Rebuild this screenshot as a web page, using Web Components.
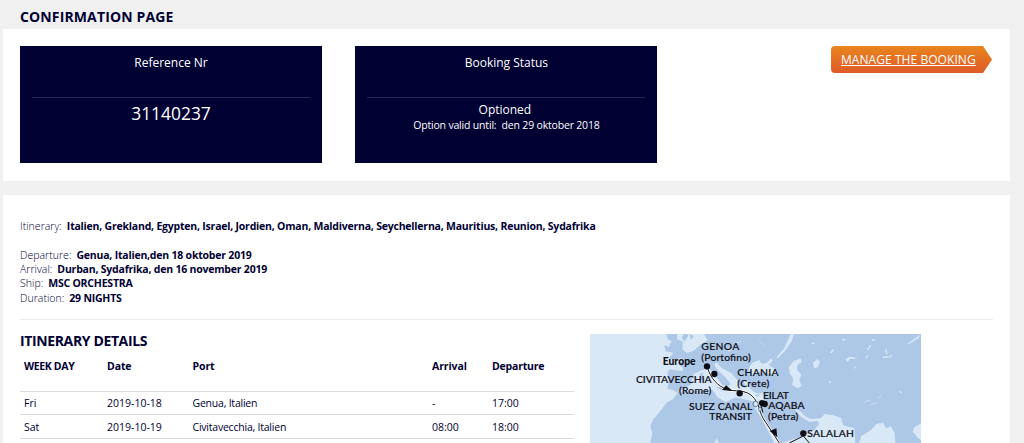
<!DOCTYPE html>
<html lang="en">
<head>
<meta charset="utf-8">
<title>Confirmation page</title>
<style>
	body {
		margin: 0;
		height: 443px;
		overflow: hidden;
		background: #f0f0f0;
		color: #000033;
		font: 11px/14px "Open Sans", sans-serif;
	}

	.page-title {
		--title-spacing: 0.13px;
	}
</style>
</head>
<body>
<booking-page>
	<section-title slot="title" class="page-title">CONFIRMATION PAGE</section-title>
	<page-panel class="summary">
		<status-card label="Reference Nr"><span slot="large">31140237</span></status-card>
		<status-card label="Booking Status">
			<span slot="value">Optioned</span>
			<span slot="note">Option valid until:&nbsp; den 29 oktober 2018</span>
		</status-card>
		<arrow-button href="#">MANAGE THE BOOKING</arrow-button>
	</page-panel>
	<page-panel class="details">
		<cruise-facts>
			<cruise-fact label="Itinerary:" class="spaced">Italien, Grekland, Egypten, Israel, Jordien, Oman, Maldiverna, Seychellerna, Mauritius, Reunion, Sydafrika</cruise-fact>
			<cruise-fact label="Departure:">Genua, Italien,den 18 oktober 2019</cruise-fact>
			<cruise-fact label="Arrival:">Durban, Sydafrika, den 16 november 2019</cruise-fact>
			<cruise-fact label="Ship:">MSC ORCHESTRA</cruise-fact>
			<cruise-fact label="Duration:">29 NIGHTS</cruise-fact>
		</cruise-facts>
		<itinerary-layout>
			<section-title>ITINERARY DETAILS</section-title>
			<itinerary-table></itinerary-table>
			<route-map slot="map"></route-map>
		</itinerary-layout>
	</page-panel>
</booking-page>

<script>
/** Attaches an open shadow root holding the given markup. */
function attach(element, html) {
	element.attachShadow({ mode: "open" }).innerHTML = html;
}

/**
 * Page frame.
 *
 * @slot title - The page heading.
 * @slot - The panels.
 */
class BookingPage extends HTMLElement {
	connectedCallback() {
		attach(this, `
			<style>
				:host { display: block; padding: 0 14px 0 3px; }
				header { box-sizing: border-box; height: 29px; padding: 7px 0 0 17px; }
				main { display: flex; flex-direction: column; gap: 14px; }
				::slotted(.summary) {
					display: flex;
					box-sizing: border-box;
					height: 152px;
					padding: 17px 18px 0 17px;
					align-items: flex-start;
					gap: 33.4px;
				}
				::slotted(.details) {
					box-sizing: border-box;
					height: 248px;
					padding: 24px 17px 0;
				}
			</style>
			<header><slot name="title"></slot></header>
			<main><slot></slot></main>
		`);
	}
}

class SectionTitle extends HTMLElement {
	connectedCallback() {
		attach(this, `
			<style>
				:host { display: block; font-size: 14px; line-height: 19px; }
				h2 { margin: 0; font: inherit; font-weight: 700; letter-spacing: var(--title-spacing, -0.37px); }
			</style>
			<h2><slot></slot></h2>
		`);
	}
}

class PagePanel extends HTMLElement {
	connectedCallback() {
		attach(this, `
			<style>:host { display: block; background: #fff; }</style>
			<slot></slot>
		`);
	}
}

/**
 * Dark card with a label above a rule and a value below it.
 *
 * @attribute {string} label - The label.
 * @slot large - A value in large type.
 * @slot value - A value in regular type.
 * @slot note - Small print below the value.
 */
class StatusCard extends HTMLElement {
	connectedCallback() {
		attach(this, `
			<style>
				:host {
					display: block;
					box-sizing: border-box;
					width: 302px;
					height: 117.4px;
					padding: 6px 12px 0;
					background: #000033;
					color: #fff;
					text-align: center;
				}
				.label {
					height: 44px;
					border-bottom: 1px solid #25254f;
					padding-top: 1px;
					font-size: 12px;
					line-height: 20px;
				}
				.value { padding-top: 2px; }
				slot { display: block; }
				slot[name="large"] { font-size: 17.4px; line-height: 27px; }
				slot[name="value"] { font-size: 12px; line-height: 19px; padding-right: 3px; }
				slot[name="note"] { font-size: 10.5px; line-height: 13px; letter-spacing: -0.18px; }
			</style>
			<div class="label">${this.getAttribute("label")}</div>
			<div class="value">
				<slot name="large"></slot>
				<slot name="value"></slot>
				<slot name="note"></slot>
			</div>
		`);
	}
}

class ArrowButton extends HTMLElement {
	connectedCallback() {
		attach(this, `
			<style>
				:host { display: block; margin-left: auto; }
				a {
					display: block;
					box-sizing: border-box;
					width: 161px;
					height: 27px;
					padding-left: 10px;
					border-radius: 4px 0 0 4px;
					background: linear-gradient(#e8851d, #df5a29);
					clip-path: polygon(0 0, 152px 0, 100% 50%, 152px 100%, 0 100%);
					color: #fff;
					font-size: 12px;
					line-height: 27px;
					letter-spacing: 0.06px;
					white-space: nowrap;
				}
			</style>
			<a href="${this.getAttribute("href")}"><slot></slot></a>
		`);
	}
}

class CruiseFacts extends HTMLElement {
	connectedCallback() {
		attach(this, `
			<style>
				:host {
					display: block;
					box-sizing: border-box;
					height: 101px;
					border-bottom: 1px solid #ebebeb;
				}
				::slotted(.spaced) { margin-bottom: 14.5px; }
			</style>
			<slot></slot>
		`);
	}
}

/**
 * @attribute {string} label - The name of the fact.
 * @slot - Its value.
 */
class CruiseFact extends HTMLElement {
	connectedCallback() {
		attach(this, `
			<style>
				:host { display: flex; gap: 5px; line-height: 14.25px; white-space: nowrap; font-size: 10.5px; }
				span { font-weight: 300; letter-spacing: 0.03px; }
				b { letter-spacing: -0.21px; }
			</style>
			<span>${this.getAttribute("label")}</span><b><slot></slot></b>
		`);
	}
}

/**
 * Two columns: the table and the map.
 *
 * @slot - The left column.
 * @slot map - The right column.
 */
class ItineraryLayout extends HTMLElement {
	connectedCallback() {
		attach(this, `
			<style>
				:host { display: grid; grid-template-columns: 554px 331px; column-gap: 16px; padding-top: 14px; }
				.list { margin-top: -3px; height: 112px; }
			</style>
			<div class="list"><slot></slot></div>
			<slot name="map"></slot>
		`);
	}
}

class ItineraryTable extends HTMLElement {
	stops = [
		["Fri", "2019-10-18", "Genua, Italien", "-", "17:00"],
		["Sat", "2019-10-19", "Civitavecchia, Italien", "08:00", "18:00"],
	];

	connectedCallback() {
		const rows = this.stops.map(
			(stop) => `<tr>${stop.map((cell) => `<td>${cell}</td>`).join("")}</tr>`
		).join("");

		attach(this, `
			<style>
				:host { display: block; font-size: 10.5px; }
				table { width: 554px; table-layout: fixed; border-collapse: collapse; }
				th, td { padding: 0 4px; text-align: left; border-bottom: 1px solid #dcdcdc; }
				th { height: 41px; padding-top: 9px; box-sizing: border-box; vertical-align: top; letter-spacing: -0.1px; }
				th:first-child { letter-spacing: -0.35px; }
				th:last-child { letter-spacing: -0.2px; }
				td { height: 22.6px; line-height: 22px; }
				td:nth-child(3) { letter-spacing: -0.22px; }
				tr:last-child td { padding-top: 1px; height: 21.6px; }
			</style>
			<table>
				<colgroup>
					<col style="width: 83px"><col style="width: 85.5px"><col style="width: 239.5px">
					<col style="width: 60px"><col>
				</colgroup>
				<tr><th>WEEK DAY</th><th>Date</th><th>Port</th><th>Arrival</th><th>Departure</th></tr>
				${rows}
			</table>
		`);
	}
}

/** Map of the route. Drawn at three units to the pixel. */
class RouteMap extends HTMLElement {
	connectedCallback() {
		attach(this, `
			<style>
				:host { display: block; }
				svg { display: block; }
				.land { fill: #adc7e7; }
				.sea { fill: #d8e8f7; }
				.route { fill: none; stroke: #fff; stroke-width: 7; }
				.route.line { stroke: #111; stroke-width: 3; }
				text { font: 500 31px/1 Lato, sans-serif; fill: #0c0c14; stroke: #0c0c14; stroke-width: 0.5; }
				.bold { font-weight: 900; stroke: none; }
			</style>
			<svg width="331" height="109" viewBox="7 6 993 327">
				<rect class="land" x="7" y="6" width="993" height="327"/>
				<g class="sea">
					<path d="M7 6H236L240 22 252 28 244 45 230 40 234 58 258 62 244 79 262 84 278 77 289 82 270 96 287 107 284 118 245 112 239 123 244 143 239 170 256 174 269 183 257 201 237 212 219 236 197 262 188 282 194 305 188 333H7Z"/>
					<path d="M268 22 286 29 284 52 297 62 309 60 324 52 340 36 360 25 349 6H304L291 29 282 17 288 6H268Z"/>
					<path d="M267 177 284 174 310 157 318 126 341 115 365 111 386 128 405 155 418 163 430 157 414 137 387 111 379 97 386 90 402 108 431 124 447 142 455 160 475 169 467 143 483 150 488 170 505 184 528 184 529 207 503 210 470 202 444 196 414 211 389 195 375 174 332 176 294 180Z"/>
					<path d="M482 112 493 93 514 84 523 96 541 91 548 79 556 86 543 99 568 115 571 128 543 126 515 120 494 128Z"/>
					<path d="M603 106 619 86 639 80 642 91 629 99 628 114 641 128 635 143 642 162 630 169 613 158 617 142 606 123Z"/>
					<path d="M676 93 688 81 697 90 690 106 679 108Z"/>
					<path d="M500 226 509 221 522 245 535 271 548 290 562 311 576 333H560L535 285 520 257Z"/>
					<path d="M619 229 636 236 651 251 668 261 700 259 711 246 737 250 760 258 766 279 782 284 800 288 803 333H583L646 312 680 294 694 276 690 267 664 269 640 254Z"/>
					<path d="M814 333 821 312 850 294 866 276 886 272 896 289 910 283 921 304 923 333Z"/>
					<path d="M1000 274 981 284 975 299 991 318 1000 324Z"/>
					<path d="M609 6H619L611 30 591 58 570 79 566 76 588 51Z"/>
					<path d="M998 8 978 22 956 38 965 35 993 19Z"/>
					<path d="M773 82 786 74 810 77 801 80 786 80 781 90Z"/>
					<path d="M381 333 387 319 393 333Z"/>
				</g>
				<g class="land">
					<path d="M362 105 379 103 397 125 421 148 413 151 405 166 400 153 385 135Z"/>
					<path d="M337 126 345 121 347 145 337 145ZM384 165 405 165 402 175ZM501 190 518 185 510 194Z"/>
					<path d="M307 6 319 13 310 24 307 15Z"/>
				</g>
				<g fill="none" stroke="#d8e8f7" stroke-width="4" stroke-linecap="round">
					<path d="M730 62 736 54M673 33 679 35M841 52 848 41M895 53 897 65M887 76 900 75M836 76 839 72M854 23 860 26M765 22 771 24M801 108 803 105M936 179 940 181M726 149 729 152M905 75 911 71M423 57 438 50"/>
					<path stroke-width="2" d="M830 210 845 205M849 217 867 213M873 198 879 193M440 33 461 29M514 25 528 39"/>
				</g>
				<path class="route" d="M358 103C370 144 392 161 416 172 440 181 475 168 500 199 521 230 512 240 534 271L575 333"/>
				<path class="route line" d="M358 103C370 144 392 161 416 172 440 181 475 168 500 199 521 230 512 240 534 271L575 333"/>
				<path class="route line" d="M519 216 526 242M605 333 647 312 665 333"/>
				<path fill="#0c0c14" d="M403 174 415 160 435 177ZM546 297 566 289 569 316Z"/>
				<g fill="#0c0c14">
					<circle cx="358" cy="103" r="9.5"/>
					<circle cx="380" cy="126" r="9.5"/>
					<circle cx="456" cy="184" r="9.5"/>
					<circle cx="523" cy="213" r="9"/>
					<circle cx="531" cy="216" r="9.5"/>
					<circle cx="647" cy="304" r="9.5"/>
				</g>
				<g class="sea" stroke="#234867" stroke-width="2">
					<circle cx="504" cy="216" r="8"/>
					<ellipse cx="517" cy="232" rx="4" ry="7"/>
				</g>
				<text x="341" y="55" textLength="114">GENOA</text>
				<text x="341" y="87" textLength="148">(Portofino)</text>
				<text class="bold" x="225" y="99" textLength="99">Europe</text>
				<text x="145" y="154" textLength="227">CIVITAVECCHIA</text>
				<text x="274" y="186" textLength="97">(Rome)</text>
				<text x="449" y="132" textLength="124">CHANIA</text>
				<text x="449" y="165" textLength="96">(Crete)</text>
				<text x="526" y="201" textLength="78">EILAT</text>
				<text x="542" y="231" textLength="109">AQABA</text>
				<text x="541" y="263" textLength="91">(Petra)</text>
				<text x="304" y="234" textLength="190">SUEZ CANAL</text>
				<text x="365" y="265" textLength="128">TRANSIT</text>
				<text x="659" y="314" textLength="140">SALALAH</text>
			</svg>
		`);
	}
}

customElements.define("booking-page", BookingPage);
customElements.define("section-title", SectionTitle);
customElements.define("page-panel", PagePanel);
customElements.define("status-card", StatusCard);
customElements.define("arrow-button", ArrowButton);
customElements.define("cruise-facts", CruiseFacts);
customElements.define("cruise-fact", CruiseFact);
customElements.define("itinerary-layout", ItineraryLayout);
customElements.define("itinerary-table", ItineraryTable);
customElements.define("route-map", RouteMap);
</script>
</body>
</html>
